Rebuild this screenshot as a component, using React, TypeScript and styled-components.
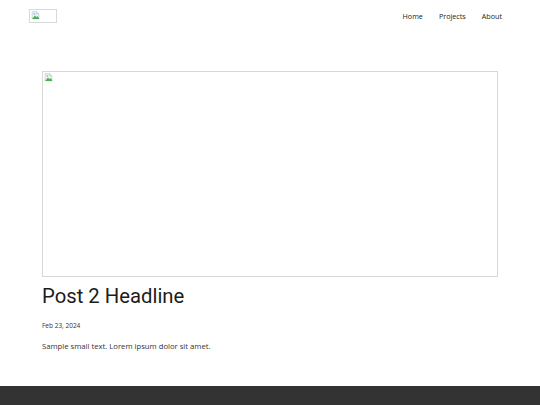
import React from 'react';
import styled, { createGlobalStyle } from 'styled-components';

const GlobalStyle = createGlobalStyle`
  html, body {
    margin: 0;
    padding: 0;
    background: #fff;
  }
  body {
    font-family: "Open Sans", "Liberation Sans", sans-serif;
    color: #222;
  }
`;

const Page = styled.div`
  display: flex;
  flex-direction: column;
`;

const Header = styled.header`
  display: flex;
  align-items: flex-start;
  justify-content: space-between;
  padding: 9px 38px 0 29px;
  height: 62px;
  box-sizing: border-box;
`;

const Nav = styled.nav`
  display: flex;
  gap: 16px;
`;

const NavLink = styled.a`
  font-size: 7.2px;
  color: #222;
  text-decoration: none;
  line-height: 14px;
`;

const Placeholder = styled.div<{ $w: string; $h: number }>`
  width: ${(p) => p.$w};
  height: ${(p) => p.$h}px;
  box-sizing: border-box;
  border: 1px solid #d8d8d8;
  padding: 1px;
  overflow: hidden;
`;

const Main = styled.main`
  padding: 9px 42px 0 42px;
`;

const Headline = styled.h1`
  margin: 5px 0 0;
  font-family: Roboto, "Liberation Sans", sans-serif;
  font-weight: 400;
  font-size: 20.3px;
  line-height: 28px;
  color: #1c1c1c;
`;

const DateLine = styled.div`
  margin-top: 11px;
  font-size: 6.5px;
  color: #333;
`;

const Body = styled.p`
  margin: 11px 0 0;
  font-size: 7.7px;
  color: #333;
`;

const Footer = styled.footer`
  margin-top: 35px;
  height: 19px;
  background: #333;
`;

const Icon = styled.svg`
  display: block;
`;

const BrokenIcon = () => (
  <Icon width="9" height="9" viewBox="0 0 16 16">
    <path d="M2 1h8l4 4v9H2z" fill="#eef2f6" stroke="#b8c0c8" />
    <path d="M10 1v4h4" fill="#dde3ea" stroke="#b8c0c8" />
    <path d="M2 14l5-6 3 3 2-2 3 5z" fill="#4caf50" />
    <circle cx="6" cy="5" r="1.5" fill="#8fb8de" />
  </Icon>
);

const App = () => (
  <Page>
    <GlobalStyle />
    <Header>
      <Placeholder $w="28px" $h={14}>
        <BrokenIcon />
      </Placeholder>
      <Nav>
        <NavLink href="#">Home</NavLink>
        <NavLink href="#">Projects</NavLink>
        <NavLink href="#">About</NavLink>
      </Nav>
    </Header>
    <Main>
      <Placeholder $w="100%" $h={206}>
        <BrokenIcon />
      </Placeholder>
      <Headline>Post 2 Headline</Headline>
      <DateLine>Feb 23, 2024</DateLine>
      <Body>Sample small text. Lorem ipsum dolor sit amet.</Body>
    </Main>
    <Footer />
  </Page>
);

export default App;
